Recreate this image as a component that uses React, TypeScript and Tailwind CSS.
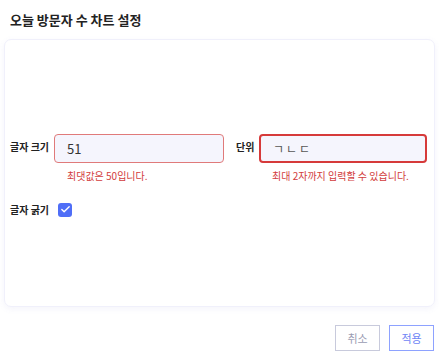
import { Check } from 'lucide-react';

const font = { fontFamily: '"Noto Sans CJK KR", "Noto Sans", sans-serif' };

function Field({ label, value, error, focused, width, labelWidth, muted }: {
  label: string; value: string; error: string; focused?: boolean; width: string; labelWidth: string; muted?: boolean;
}) {
  return (
    <div className="flex items-start">
      <div className={`${labelWidth} pt-[5px] text-[10px] font-bold text-[#222]`}>{label}</div>
      <div className="flex flex-col">
        <div
          className={`${width} h-[29px] flex items-center rounded-[4px] bg-[#f5f5fd] px-[12px] ${
            focused ? 'border-2 border-[#d63a3a]' : 'border border-[#e07a7a]'
          }`}
        >
          <span className={muted ? 'text-[12px] text-[#555] tracking-[2px]' : 'text-[13px] text-[#333]'}>{value}</span>
        </div>
        <div className="mt-[5px] pl-[13px] text-[10px] text-[#d23c3c]">{error}</div>
      </div>
    </div>
  );
}

export default function App() {
  return (
    <div className="w-[439px] h-[362px] bg-white relative overflow-hidden" style={font}>
      <h1 className="px-[10px] pt-[10px] text-[13px] font-bold text-[#222] leading-[19px]">오늘 방문자 수 차트 설정</h1>
      <div className="mx-[4px] mt-[10px] h-[268px] rounded-[7px] border border-[#f0f0fb] shadow-[0_2px_6px_rgba(120,120,200,0.08)] pl-[5px] pt-[94px]">
        <div className="flex gap-[12px]">
          <Field label="글자 크기" value="51" error="최댓값은 50입니다." width="w-[170px]" labelWidth="w-[44px]" />
          <Field label="단위" value="ㄱㄴㄷ" error="최대 2자까지 입력할 수 있습니다." focused width="w-[168px]" labelWidth="w-[23px]" muted />
        </div>
        <div className="mt-[19px] flex items-center">
          <div className="w-[48px] text-[10px] font-bold text-[#222]">글자 굵기</div>
          <div className="w-[14px] h-[14px] rounded-[3px] bg-[#4f6ef7] flex items-center justify-center">
            <Check size={11} strokeWidth={3} className="text-white" />
          </div>
        </div>
      </div>
      <div className="flex justify-end gap-[9px] pr-[5px] mt-[18px]">
        <button className="w-[45px] h-[26px] border border-[#c8cadc] text-[11px] text-[#9a9cb2] bg-white">취소</button>
        <button className="w-[45px] h-[26px] border border-[#8ea2ff] text-[11px] text-[#6f86f5] bg-white">적용</button>
      </div>
    </div>
  );
}
